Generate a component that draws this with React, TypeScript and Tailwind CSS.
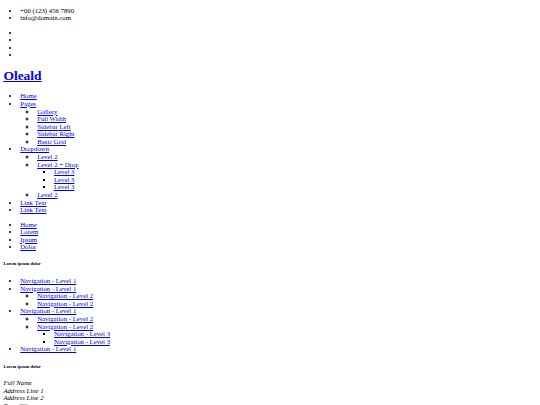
import React from "react";

const A = ({ children }: { children: React.ReactNode }) => (
  <a href="#" className="text-[#0000ee] underline">
    {children}
  </a>
);

const ul1 = "list-disc pl-[2.5em] my-[1em]";
const ul2 = "list-[circle] pl-[2.5em]";
const ul3 = "list-[square] pl-[2.5em]";
const h6 = "text-[0.67em] font-bold my-[2.33em]";

export default function App() {
  return (
    <div className="px-[0.5em] text-[6.75px] leading-[1.126] text-black bg-white font-['Liberation_Serif','Times_New_Roman',serif] min-h-[405px]">
      <ul className={ul1}>
        <li>+00 (123) 456 7890</li>
        <li>info@domain.com</li>
      </ul>
      <ul className={ul1}>
        <li>{"\u200B"}</li>
        <li>{"\u200B"}</li>
        <li>{"\u200B"}</li>
        <li>{"\u200B"}</li>
      </ul>
      <h1 className="text-[2em] font-bold my-[0.67em]">
        <A>Oleald</A>
      </h1>
      <ul className={ul1}>
        <li><A>Home</A></li>
        <li>
          <A>Pages</A>
          <ul className={ul2}>
            <li><A>Gallery</A></li>
            <li><A>Full Width</A></li>
            <li><A>Sidebar Left</A></li>
            <li><A>Sidebar Right</A></li>
            <li><A>Basic Grid</A></li>
          </ul>
        </li>
        <li>
          <A>Dropdown</A>
          <ul className={ul2}>
            <li><A>Level 2</A></li>
            <li>
              <A>Level 2 + Drop</A>
              <ul className={ul3}>
                <li><A>Level 3</A></li>
                <li><A>Level 3</A></li>
                <li><A>Level 3</A></li>
              </ul>
            </li>
            <li><A>Level 2</A></li>
          </ul>
        </li>
        <li><A>Link Text</A></li>
        <li><A>Link Text</A></li>
      </ul>
      <ul className={ul1}>
        <li><A>Home</A></li>
        <li><A>Lorem</A></li>
        <li><A>Ipsum</A></li>
        <li><A>Dolor</A></li>
      </ul>
      <h6 className={h6}>Lorem ipsum dolor</h6>
      <ul className={ul1}>
        <li><A>Navigation - Level 1</A></li>
        <li>
          <A>Navigation - Level 1</A>
          <ul className={ul2}>
            <li><A>Navigation - Level 2</A></li>
            <li><A>Navigation - Level 2</A></li>
          </ul>
        </li>
        <li>
          <A>Navigation - Level 1</A>
          <ul className={ul2}>
            <li><A>Navigation - Level 2</A></li>
            <li>
              <A>Navigation - Level 2</A>
              <ul className={ul3}>
                <li><A>Navigation - Level 3</A></li>
                <li><A>Navigation - Level 3</A></li>
              </ul>
            </li>
          </ul>
        </li>
        <li><A>Navigation - Level 1</A></li>
      </ul>
      <h6 className={h6}>Lorem ipsum dolor</h6>
      <address className="italic">
        Full Name
        <br />
        Address Line 1
        <br />
        Address Line 2
        <br />
        Town/City
        <br />
        Postcode/Zip
      </address>
    </div>
  );
}
